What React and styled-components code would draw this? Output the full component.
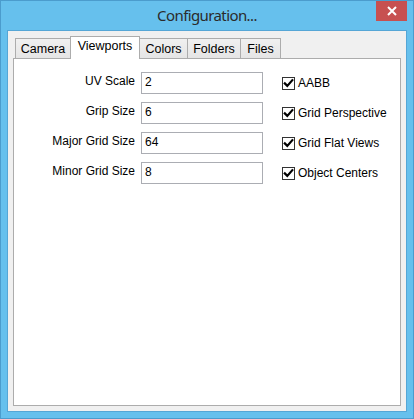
import React from "react";
import styled, { createGlobalStyle } from "styled-components";

const GlobalStyle = createGlobalStyle`
  html, body {
    margin: 0;
    padding: 0;
    background: #ffffff;
  }
  body {
    font-family: "Liberation Sans", Arial, sans-serif;
    font-size: 12px;
    color: #000;
  }
`;

const tabs = [
  { name: "Camera", width: 56 },
  { name: "Viewports", width: 70 },
  { name: "Colors", width: 49 },
  { name: "Folders", width: 54 },
  { name: "Files", width: 41 },
];

const fields = [
  { label: "UV Scale", value: "2" },
  { label: "Grip Size", value: "6" },
  { label: "Major Grid Size", value: "64" },
  { label: "Minor Grid Size", value: "8" },
];

const options = ["AABB", "Grid Perspective", "Grid Flat Views", "Object Centers"];

const CheckMark = () => (
  <svg width="11" height="11" viewBox="0 0 11 11">
    <path
      d="M1.8 5.4 L4.3 7.9 L9.3 2.2"
      fill="none"
      stroke="#000"
      strokeWidth="2.2"
      strokeLinecap="square"
    />
  </svg>
);

const CloseIcon = () => (
  <svg width="10" height="10" viewBox="0 0 10 10">
    <path d="M1 1 L9 9 M9 1 L1 9" stroke="#fff" strokeWidth="2" />
  </svg>
);

const App = () => {
  return (
    <>
      <GlobalStyle />
      <Window>
        <TitleBar>
          <span />
          <Title>Configuration...</Title>
          <CloseButton>
            <CloseIcon />
          </CloseButton>
        </TitleBar>
        <Client>
          <TabStrip>
            {tabs.map((t) => (
              <Tab key={t.name} $active={t.name === "Viewports"} $width={t.width}>
                {t.name}
              </Tab>
            ))}
          </TabStrip>
          <Panel>
            <FieldGrid>
              {fields.map((f) => (
                <React.Fragment key={f.label}>
                  <FieldLabel>{f.label}</FieldLabel>
                  <TextBox defaultValue={f.value} />
                </React.Fragment>
              ))}
            </FieldGrid>
            <OptionList>
              {options.map((o) => (
                <OptionRow key={o}>
                  <CheckBox>
                    <CheckMark />
                  </CheckBox>
                  <OptionLabel>{o}</OptionLabel>
                </OptionRow>
              ))}
            </OptionList>
          </Panel>
        </Client>
      </Window>
    </>
  );
};

const Window = styled.div`
  width: 414px;
  height: 419px;
  box-sizing: border-box;
  border: 1px solid #4b9ccd;
  background: #66c0ed;
  padding: 0 6px 6px 6px;
  display: flex;
  flex-direction: column;
`;

const TitleBar = styled.div`
  height: 29px;
  display: grid;
  grid-template-columns: 1fr auto 1fr;
  align-items: start;
`;

const Title = styled.div`
  font-family: "Noto Sans", "Open Sans", sans-serif;
  font-size: 15px;
  line-height: 20px;
  padding-top: 4px;
  color: #2b2b2b;
  letter-spacing: -0.6px;
`;

const CloseButton = styled.div`
  justify-self: end;
  width: 31px;
  height: 20px;
  background: #c75050;
  display: flex;
  align-items: center;
  justify-content: center;
`;

const Client = styled.div`
  flex: 1;
  border: 1px solid #55a6d6;
  background: #f0f0f0;
  padding: 5px;
  display: flex;
  flex-direction: column;
`;

const TabStrip = styled.div`
  display: flex;
  align-items: flex-start;
  padding-left: 2px;
  height: 22px;
  position: relative;
  z-index: 1;
`;

const Tab = styled.div`
  box-sizing: border-box;
  width: ${(p) => p.$width}px;
  margin-left: -1px;
  &:first-child {
    margin-left: 0;
  }
  border: 1px solid #acacac;
  border-bottom: none;
  text-align: center;
  line-height: 14px;
  font-size: 12.5px;
  color: #000;
  height: ${(p) => (p.$active ? 23 : 20)}px;
  margin-top: ${(p) => (p.$active ? 0 : 2)}px;
  padding-top: ${(p) => (p.$active ? 2 : 3)}px;
  background: ${(p) =>
    p.$active ? "#ffffff" : "linear-gradient(#f0f0f0, #e5e5e5)"};
  position: relative;
  z-index: ${(p) => (p.$active ? 2 : 1)};
`;

const Panel = styled.div`
  flex: 1;
  border: 1px solid #acacac;
  background: #ffffff;
  padding: 13px 0 0 0;
  display: flex;
  align-items: flex-start;
`;

const FieldGrid = styled.div`
  display: grid;
  grid-template-columns: 121px 122px;
  column-gap: 6px;
  row-gap: 8px;
`;

const FieldLabel = styled.div`
  text-align: right;
  line-height: 14px;
  padding-top: 2px;
  white-space: nowrap;
`;

const TextBox = styled.input`
  box-sizing: border-box;
  width: 122px;
  height: 22px;
  margin: 0;
  border: 1px solid #abadb3;
  padding: 0 3px 2px 3px;
  font-family: "Liberation Sans", Arial, sans-serif;
  font-size: 12px;
  color: #000;
  background: #fff;
  outline: none;
`;

const OptionList = styled.div`
  margin-left: 19px;
  display: flex;
  flex-direction: column;
  gap: 8px;
`;

const OptionRow = styled.div`
  height: 22px;
  display: flex;
  align-items: center;
  gap: 3px;
`;

const CheckBox = styled.div`
  box-sizing: border-box;
  width: 13px;
  height: 13px;
  border: 1px solid #333333;
  background: #fff;
  display: flex;
  align-items: center;
  justify-content: center;
`;

const OptionLabel = styled.span`
  line-height: 14px;
  white-space: nowrap;
`;

export default App;
